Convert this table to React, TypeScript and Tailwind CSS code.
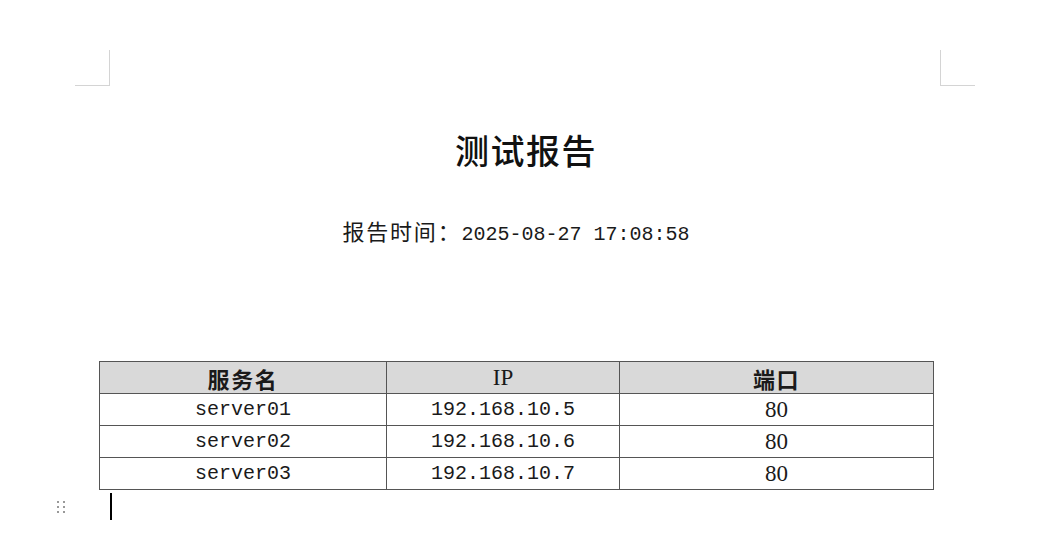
import React from "react"

const rows = [
  { name: "server01", ip: "192.168.10.5", port: "80" },
  { name: "server02", ip: "192.168.10.6", port: "80" },
  { name: "server03", ip: "192.168.10.7", port: "80" },
]

function DragHandle() {
  return (
    <div className="grid grid-cols-2 gap-x-[4px] gap-y-[3px] w-[8px]">
      {Array.from({ length: 6 }).map((_, i) => (
        <span key={i} className="block w-[2px] h-[2px] rounded-full bg-[#777]" />
      ))}
    </div>
  )
}

export default function App() {
  return (
    <div className="w-[1048px] h-[552px] bg-white overflow-hidden font-['Liberation_Mono','Noto_Sans_CJK_SC',monospace] text-[#1a1a1a]">
      {/* page corner marks */}
      <div className="flex justify-between pt-[50px] pl-[75px] pr-[73px]">
        <div className="w-[35px] h-[36px] border-r border-b border-[#d4d4d4]" />
        <div className="w-[35px] h-[36px] border-l border-b border-[#d4d4d4]" />
      </div>

      <div className="w-[834px] ml-[99px]">
        <h1 className="mt-[39px] h-[50px] leading-[50px] text-center pl-[20px] font-['Noto_Sans_CJK_SC',sans-serif] font-medium text-[34px] tracking-[1.5px] text-[#111]">
          测试报告
        </h1>

        <p className="mt-[37px] h-[36px] leading-[36px] text-center text-[20px]">
          <span className="font-['Noto_Sans_CJK_SC',sans-serif] text-[22px] tracking-[1.8px]">报告时间：</span>
          <span>2025-08-27 17:08:58</span>
        </p>

        <table className="mt-[113px] w-[834px] border-collapse table-fixed text-[20px]">
          <colgroup>
            <col className="w-[287px]" />
            <col className="w-[233px]" />
            <col className="w-[314px]" />
          </colgroup>
          <thead>
            <tr className="h-[32px] bg-[#d9d9d9]">
              <th className="border border-[#555] p-0 font-['Noto_Sans_CJK_SC',sans-serif] font-semibold text-[22px] tracking-[1.6px] leading-[30px]">
                服务名
              </th>
              <th className="border border-[#555] p-0 font-normal leading-[30px] font-['Liberation_Serif',serif] text-[23px]">
                IP
              </th>
              <th className="border border-[#555] p-0 font-['Noto_Sans_CJK_SC',sans-serif] font-semibold text-[22px] tracking-[1.4px] leading-[30px]">
                端口
              </th>
            </tr>
          </thead>
          <tbody>
            {rows.map((r) => (
              <tr key={r.name} className="h-[32px]">
                <td className="border border-[#555] p-0 text-center leading-[30px]">{r.name}</td>
                <td className="border border-[#555] p-0 text-center leading-[30px]">{r.ip}</td>
                <td className="border border-[#555] p-0 text-center leading-[30px] font-['Liberation_Serif',serif] text-[23px]">
                  {r.port}
                </td>
              </tr>
            ))}
          </tbody>
        </table>
      </div>

      <div className="flex items-center mt-[3px] pl-[57px] h-[27px]">
        <DragHandle />
        <span className="ml-[45px] block w-[2px] h-[27px] bg-black" />
      </div>
    </div>
  )
}
